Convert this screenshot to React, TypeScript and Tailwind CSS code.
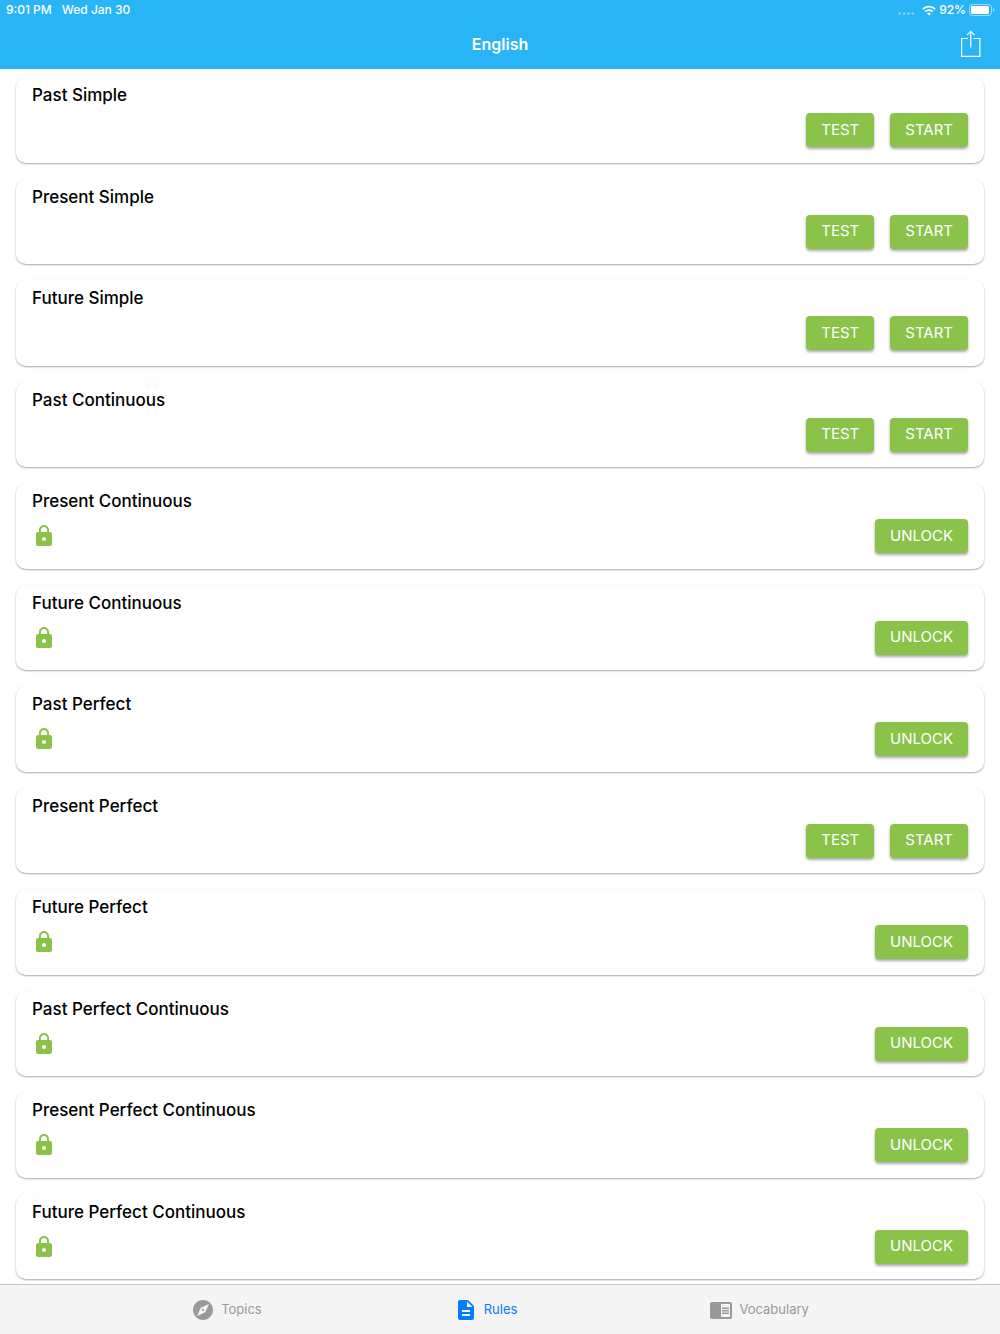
import { useState } from "react";
import {
  MdChromeReaderMode,
  MdDescription,
  MdExplore,
  MdLock,
} from "react-icons/md";

const rules = [
  { title: "Past Simple", locked: false },
  { title: "Present Simple", locked: false },
  { title: "Future Simple", locked: false },
  { title: "Past Continuous", locked: false },
  { title: "Present Continuous", locked: true },
  { title: "Future Continuous", locked: true },
  { title: "Past Perfect", locked: true },
  { title: "Present Perfect", locked: false },
  { title: "Future Perfect", locked: true },
  { title: "Past Perfect Continuous", locked: true },
  { title: "Present Perfect Continuous", locked: true },
  { title: "Future Perfect Continuous", locked: true },
];

const tabs = [
  { label: "Topics", icon: MdExplore },
  { label: "Rules", icon: MdDescription },
  { label: "Vocabulary", icon: MdChromeReaderMode },
];

function StatusBar() {
  return (
    <div className="flex h-5 items-center justify-between pl-1.5 pr-[5px] text-xs font-medium">
      <div className="flex gap-2.5">
        <span>9:01 PM</span>
        <span>Wed Jan 30</span>
      </div>
      <div className="flex items-center gap-[3px]">
        <svg width="17" height="4" viewBox="0 0 17 4" fill="#fff" opacity="0.4" className="mt-2 mr-1">
          <circle cx="1.7" cy="1.6" r="1.4" />
          <circle cx="6.1" cy="1.6" r="1.4" />
          <circle cx="10.5" cy="1.6" r="1.4" />
          <circle cx="14.9" cy="1.6" r="1.4" />
        </svg>
        <svg width="14" height="11" viewBox="0 0 14 11" fill="none" stroke="#fff" strokeWidth="1.8">
          <path d="M0.8 4.2a8.8 8.8 0 0 1 12.4 0" />
          <path d="M3.2 6.7a5.4 5.4 0 0 1 7.6 0" />
          <path d="M7 10.4L5.1 8.5a2.7 2.7 0 0 1 3.8 0z" fill="#fff" stroke="none" />
        </svg>
        <span>92%</span>
        <svg width="26" height="12" viewBox="0 0 26 12">
          <rect x="0.5" y="0.5" width="22" height="11" rx="2.5" fill="none" stroke="#fff" strokeOpacity="0.5" />
          <rect x="2" y="2" width="18" height="8" rx="1" fill="#fff" />
          <path d="M24 4v4c1-.4 1.5-1.1 1.5-2S25 4.4 24 4z" fill="#fff" opacity="0.5" />
        </svg>
      </div>
    </div>
  );
}

function ActionButton({ label }: { label: string }) {
  return (
    <button className="h-[34px] rounded bg-[#8bc34a] px-[15px] text-[15px] text-white shadow-[0_2px_3px_rgba(0,0,0,0.35)]">
      {label}
    </button>
  );
}

function RuleCard({ title, locked }: { title: string; locked: boolean }) {
  return (
    <li className="rounded-[10px] bg-white px-4 pt-1.5 pb-3 shadow-[0_1px_2px_rgba(0,0,0,0.35)]">
      <h2 className="text-[17px] leading-6 font-medium text-black">{title}</h2>
      <div className="mt-1.5 flex items-center justify-between">
        <div>{locked && <MdLock size={24} color="#8bc34a" title="Locked" />}</div>
        <div className="flex gap-4">
          {locked ? (
            <ActionButton label="UNLOCK" />
          ) : (
            <>
              <ActionButton label="TEST" />
              <ActionButton label="START" />
            </>
          )}
        </div>
      </div>
    </li>
  );
}

export default function App() {
  const [activeTab, setActiveTab] = useState("Rules");

  return (
    <div className="flex min-h-screen flex-col bg-white font-['Inter','Liberation_Sans',sans-serif]">
      <header className="bg-[#29b4f6] text-white">
        <StatusBar />
        <div className="grid h-[49px] grid-cols-[1fr_auto_1fr] items-center px-[18px] pb-0.5">
          <h1 className="col-start-2 text-base font-semibold">English</h1>
          <button className="justify-self-end" aria-label="Share">
            <svg width="22" height="28" viewBox="0 0 22 28" fill="none" stroke="#fff" strokeWidth="1.2">
              <path d="M8 8.5H1.6v17.9h18.300V8.5H13.5" />
              <path d="M10.75 17.5V1.5M7 5.2l3.75-3.8 3.75 3.8" />
            </svg>
          </button>
        </div>
      </header>

      <main className="flex flex-1 flex-col px-4 pt-2 pb-[5px]">
        <ul className="grid flex-1 auto-rows-fr gap-4">
          {rules.map((rule) => (
            <RuleCard key={rule.title} title={rule.title} locked={rule.locked} />
          ))}
        </ul>
      </main>

      <nav className="flex h-[50px] justify-center gap-48 border-t border-[#c4c4c4] bg-[#f5f5f5]">
        {tabs.map(({ label, icon: Icon }) => (
          <button
            key={label}
            onClick={() => setActiveTab(label)}
            className={`flex items-center gap-1.5 text-[13px] ${
              activeTab === label ? "text-[#047cff]" : "text-[#999999]"
            }`}
          >
            <Icon size={24} />
            {label}
          </button>
        ))}
      </nav>
    </div>
  );
}
